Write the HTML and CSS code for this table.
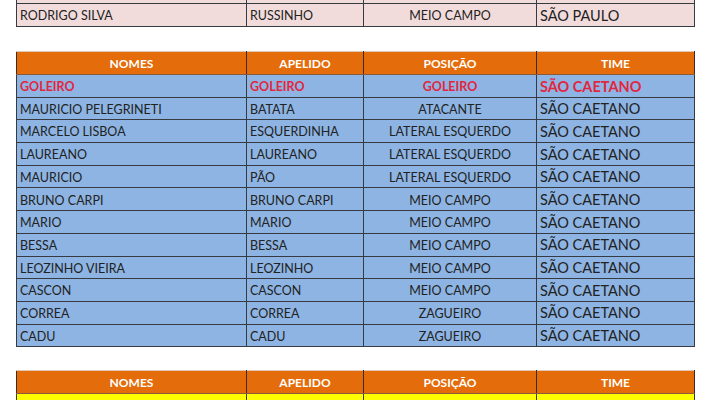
FILE: index.html
```html
<!DOCTYPE html>
<html>
<head>
<meta charset="utf-8">
<link rel="stylesheet" href="styles.css">
</head>
<body>
<div class="page">
  <table class="sheet pink top">
    <colgroup><col class="c1"><col class="c2"><col class="c3"><col class="c4"></colgroup>
    <tr class="stub"><td></td><td></td><td></td><td></td></tr>
    <tr class="main"><td>RODRIGO SILVA</td><td>RUSSINHO</td><td class="pos">MEIO CAMPO</td><td class="team">SÃO PAULO</td></tr>
  </table>

  <table class="sheet blue mid">
    <colgroup><col class="c1"><col class="c2"><col class="c3"><col class="c4"></colgroup>
    <tr class="head"><th>NOMES</th><th>APELIDO</th><th>POSIÇÃO</th><th>TIME</th></tr>
    <tr class="red"><td>GOLEIRO</td><td>GOLEIRO</td><td class="pos">GOLEIRO</td><td class="team">SÃO CAETANO</td></tr>
    <tr><td>MAURICIO PELEGRINETI</td><td>BATATA</td><td class="pos">ATACANTE</td><td class="team">SÃO CAETANO</td></tr>
    <tr><td>MARCELO LISBOA</td><td>ESQUERDINHA</td><td class="pos">LATERAL ESQUERDO</td><td class="team">SÃO CAETANO</td></tr>
    <tr><td>LAUREANO</td><td>LAUREANO</td><td class="pos">LATERAL ESQUERDO</td><td class="team">SÃO CAETANO</td></tr>
    <tr><td>MAURICIO</td><td>PÃO</td><td class="pos">LATERAL ESQUERDO</td><td class="team">SÃO CAETANO</td></tr>
    <tr><td>BRUNO CARPI</td><td>BRUNO CARPI</td><td class="pos">MEIO CAMPO</td><td class="team">SÃO CAETANO</td></tr>
    <tr><td>MARIO</td><td>MARIO</td><td class="pos">MEIO CAMPO</td><td class="team">SÃO CAETANO</td></tr>
    <tr><td>BESSA</td><td>BESSA</td><td class="pos">MEIO CAMPO</td><td class="team">SÃO CAETANO</td></tr>
    <tr><td>LEOZINHO VIEIRA</td><td>LEOZINHO</td><td class="pos">MEIO CAMPO</td><td class="team">SÃO CAETANO</td></tr>
    <tr><td>CASCON</td><td>CASCON</td><td class="pos">MEIO CAMPO</td><td class="team">SÃO CAETANO</td></tr>
    <tr><td>CORREA</td><td>CORREA</td><td class="pos">ZAGUEIRO</td><td class="team">SÃO CAETANO</td></tr>
    <tr><td>CADU</td><td>CADU</td><td class="pos">ZAGUEIRO</td><td class="team">SÃO CAETANO</td></tr>
  </table>

  <table class="sheet yellow bottom">
    <colgroup><col class="c1"><col class="c2"><col class="c3"><col class="c4"></colgroup>
    <tr class="head"><th>NOMES</th><th>APELIDO</th><th>POSIÇÃO</th><th>TIME</th></tr>
    <tr><td>&nbsp;</td><td>&nbsp;</td><td class="pos">&nbsp;</td><td class="team">&nbsp;</td></tr>
  </table>
</div>
</body>
</html>
```
FILE: styles.css
```css
html, body {
  margin: 0;
  padding: 0;
  background: #ffffff;
  overflow: hidden;
}
.page {
  width: 710px;
  height: 400px;
  padding-left: 16px;
  box-sizing: border-box;
  font-family: Lato, "Open Sans", "Liberation Sans", sans-serif;
  color: #222222;
}
.sheet {
  border-collapse: collapse;
  table-layout: fixed;
  width: 678px;
}
.c1 { width: 230px; }
.c2 { width: 117px; }
.c3 { width: 173px; }
.c4 { width: 158px; }

.sheet td, .sheet th {
  border: 1px solid #363b42;
  padding: 3px 3px 0 3px;
  font-size: 12.5px;
  white-space: nowrap;
  overflow: hidden;
  line-height: 1;
}
.sheet td {
  height: 18.7px;
}
.sheet .pos { text-align: center; }
.sheet .team { font-size: 14.5px; padding-top: 2px; }

.sheet .head th {
  background: #e46c0a;
  color: #ffffff;
  font-weight: 700;
  font-size: 12px;
  height: 20px;
  padding-top: 2px;
  text-align: center;
  border-top: 1px solid #e2c8b4;
  border-bottom: 1px solid #8a5a3a;
  border-left: 1px solid #3a2d25;
  border-right: 1px solid #3a2d25;
}

.pink td { background: #f2dcdb; }
.pink .stub td { height: 3px; padding: 0; border-top: none; }
.pink .main td { height: 19px; }
.top { margin-top: 0; }

.blue td { background: #8db4e2; }
.mid { margin-top: 24px; }

.red td { color: #e3263f; font-weight: 700; }

.yellow td { background: #ffff00; }
.bottom { margin-top: 23px; }
```
